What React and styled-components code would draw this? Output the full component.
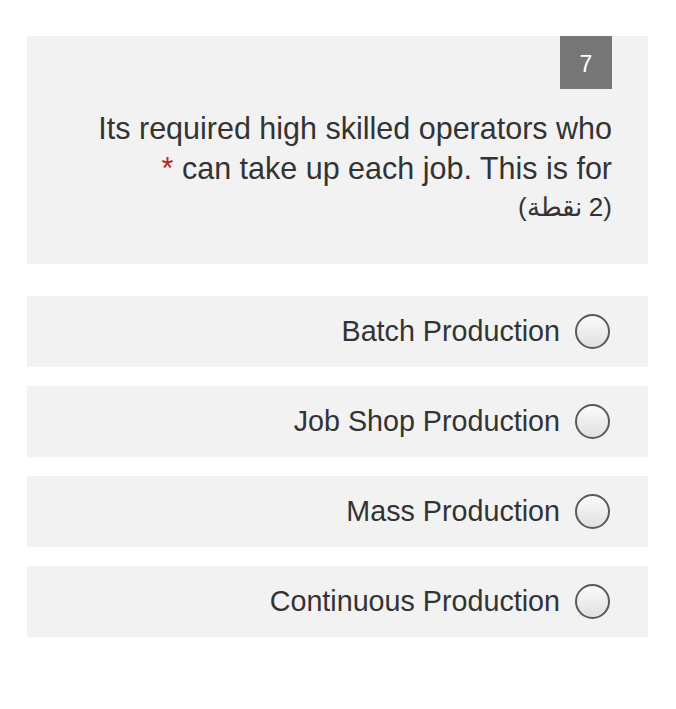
import React from 'react';
import styled, { createGlobalStyle } from 'styled-components';

const GlobalStyle = createGlobalStyle`
  html, body {
    margin: 0;
    padding: 0;
    background: #ffffff;
  }
  body {
    font-family: "Liberation Sans", Arial, "Noto Sans", sans-serif;
    color: #333333;
  }
`;

const Page = styled.div`
  display: flex;
  flex-direction: column;
  padding: 36px 28px 40px 27px;
  gap: 32px;
`;

const QuestionCard = styled.div`
  display: flex;
  flex-direction: column;
  align-items: flex-end;
  background: #f2f2f2;
  padding: 0 36px 36px 0;
`;

const NumberBadge = styled.div`
  width: 52px;
  height: 53px;
  padding-top: 3px;
  box-sizing: border-box;
  background: #767676;
  color: #ffffff;
  font-size: 23px;
  display: flex;
  align-items: center;
  justify-content: center;
`;

const QuestionText = styled.div`
  margin-top: 20px;
  font-size: 30.5px;
  line-height: 39.5px;
  text-align: right;
  color: #333333;
  white-space: nowrap;
`;

const Required = styled.span`
  color: #b3262b;
`;

const Points = styled.div`
  direction: rtl;
  font-size: 26px;
`;

const Options = styled.div`
  display: flex;
  flex-direction: column;
  gap: 19px;
`;

const OptionRow = styled.label`
  display: flex;
  align-items: center;
  justify-content: flex-end;
  gap: 15px;
  height: 71px;
  background: #f2f2f2;
  padding: 0 38px 0 0;
  box-sizing: border-box;
  font-size: 28.7px;
  color: #333333;
`;

const Radio = styled.span`
  width: 31px;
  height: 31px;
  border-radius: 50%;
  border: 2px solid #5a5a5a;
  background: linear-gradient(180deg, #fbfbfb 0%, #e0e0e0 100%);
  flex-shrink: 0;
`;

const options = [
  'Batch Production',
  'Job Shop Production',
  'Mass Production',
  'Continuous Production',
];

export default function App() {
  return (
    <>
      <GlobalStyle />
      <Page>
        <QuestionCard>
          <NumberBadge>7</NumberBadge>
          <QuestionText>
            <div>Its required high skilled operators who</div>
            <div><Required>*</Required> can take up each job. This is for</div>
            <Points>(2 نقطة)</Points>
          </QuestionText>
        </QuestionCard>
        <Options>
          {options.map((o) => (
            <OptionRow key={o}>
              <span>{o}</span>
              <Radio />
            </OptionRow>
          ))}
        </Options>
      </Page>
    </>
  );
}
